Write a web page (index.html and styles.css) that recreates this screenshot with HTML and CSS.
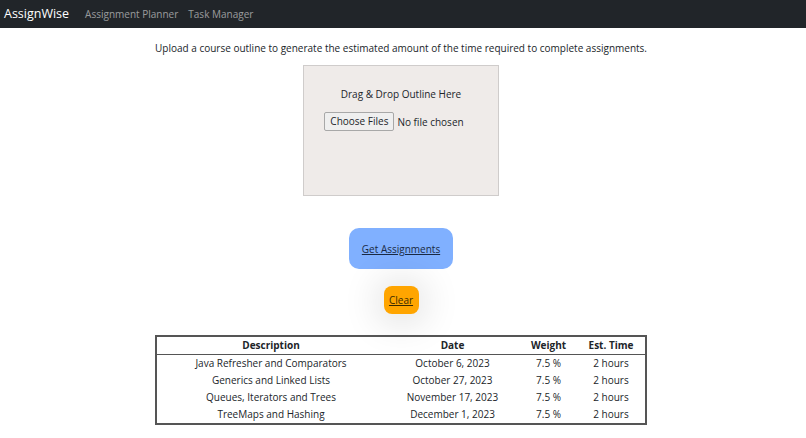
FILE: index.html
```html
<!DOCTYPE html>
<html>
<head>
<meta charset="utf-8">
<link rel="stylesheet" href="styles.css">
</head>
<body>
<nav class="navbar">
  <span class="brand">AssignWise</span>
  <a class="nav-link" href="#">Assignment Planner</a>
  <a class="nav-link" href="#">Task Manager</a>
</nav>
<main class="content">
  <p class="intro">Upload a course outline to generate the estimated amount of the time required to complete assignments.</p>
  <div class="dropzone">
    <p class="drop-label">Drag &amp; Drop Outline Here</p>
    <div class="file-input">
      <span class="file-btn">Choose Files</span>
      <span class="file-status">No file chosen</span>
    </div>
  </div>
  <button class="btn-get"><span>Get Assignments</span></button>
  <button class="btn-clear"><span>Clear</span></button>
  <table class="results">
    <thead>
      <tr><th class="c-desc">Description</th><th class="c-date">Date</th><th class="c-weight">Weight</th><th class="c-time">Est. Time</th></tr>
    </thead>
    <tbody>
      <tr><td>Java Refresher and Comparators</td><td>October 6, 2023</td><td>7.5 %</td><td>2 hours</td></tr>
      <tr><td>Generics and Linked Lists</td><td>October 27, 2023</td><td>7.5 %</td><td>2 hours</td></tr>
      <tr><td>Queues, Iterators and Trees</td><td>November 17, 2023</td><td>7.5 %</td><td>2 hours</td></tr>
      <tr><td>TreeMaps and Hashing</td><td>December 1, 2023</td><td>7.5 %</td><td>2 hours</td></tr>
    </tbody>
  </table>
</main>
</body>
</html>
```
FILE: styles.css
```css
* { box-sizing: border-box; }
body {
  margin: 0;
  font-family: "Open Sans", "Noto Sans", sans-serif;
  color: #212529;
  background: #fff;
  font-size: 10px;
}
.navbar {
  height: 28px;
  background: #212529;
  display: flex;
  align-items: center;
  padding: 0 4px 1px;
}
.brand {
  color: #fff;
  font-size: 12.5px;
  margin-right: 16px;
}
.nav-link {
  color: rgba(255,255,255,0.55);
  text-decoration: none;
  font-size: 10px;
  margin-right: 10px;
}
.content {
  display: flex;
  flex-direction: column;
  align-items: center;
  padding-right: 4px;
}
.intro {
  margin: 12px 0 0;
  line-height: 16px;
}
.dropzone {
  width: 196px;
  height: 131px;
  margin-top: 9px;
  background: #efebe9;
  border: 1px solid #cfcccb;
  display: flex;
  flex-direction: column;
  align-items: center;
  padding-top: 20px;
}
.drop-label {
  margin: 0 0 10px;
  line-height: 16px;
}
.file-input {
  display: flex;
  align-items: center;
  gap: 3px;
  margin-left: -14px;
}
.file-btn {
  border: 1px solid #a8a8a8;
  background: #efefef;
  border-radius: 2px;
  padding: 1px 5px 2px;
  line-height: 14px;
}
.btn-get {
  margin-top: 32px;
  width: 104px;
  height: 41px;
  border: none;
  border-radius: 10px;
  background: #80b0ff;
  font: inherit;
  color: #1a2a44;
  text-decoration: underline;
  padding: 0;
}
.btn-clear {
  margin-top: 17px;
  width: 35px;
  height: 28px;
  border: none;
  border-radius: 8px;
  background: #ffa500;
  font: inherit;
  color: #3a2a00;
  text-decoration: underline;
  padding: 0;
  box-shadow: 0 2px 40px rgba(0,0,0,0.24);
}
.results {
  margin-top: 21px;
  width: 490px;
  border-collapse: collapse;
  border: 2px solid #555;
  line-height: 17px;
  table-layout: fixed;
}
.results th {
  font-weight: 700;
  border-bottom: 1px solid #555;
  padding: 0;
  white-space: nowrap;
}
.results td {
  text-align: center;
  padding: 0;
  white-space: nowrap;
}
.c-desc { width: 229px; }
.c-date { width: 135px; }
.c-weight { width: 57px; }
.c-time { width: 69px; }
```
